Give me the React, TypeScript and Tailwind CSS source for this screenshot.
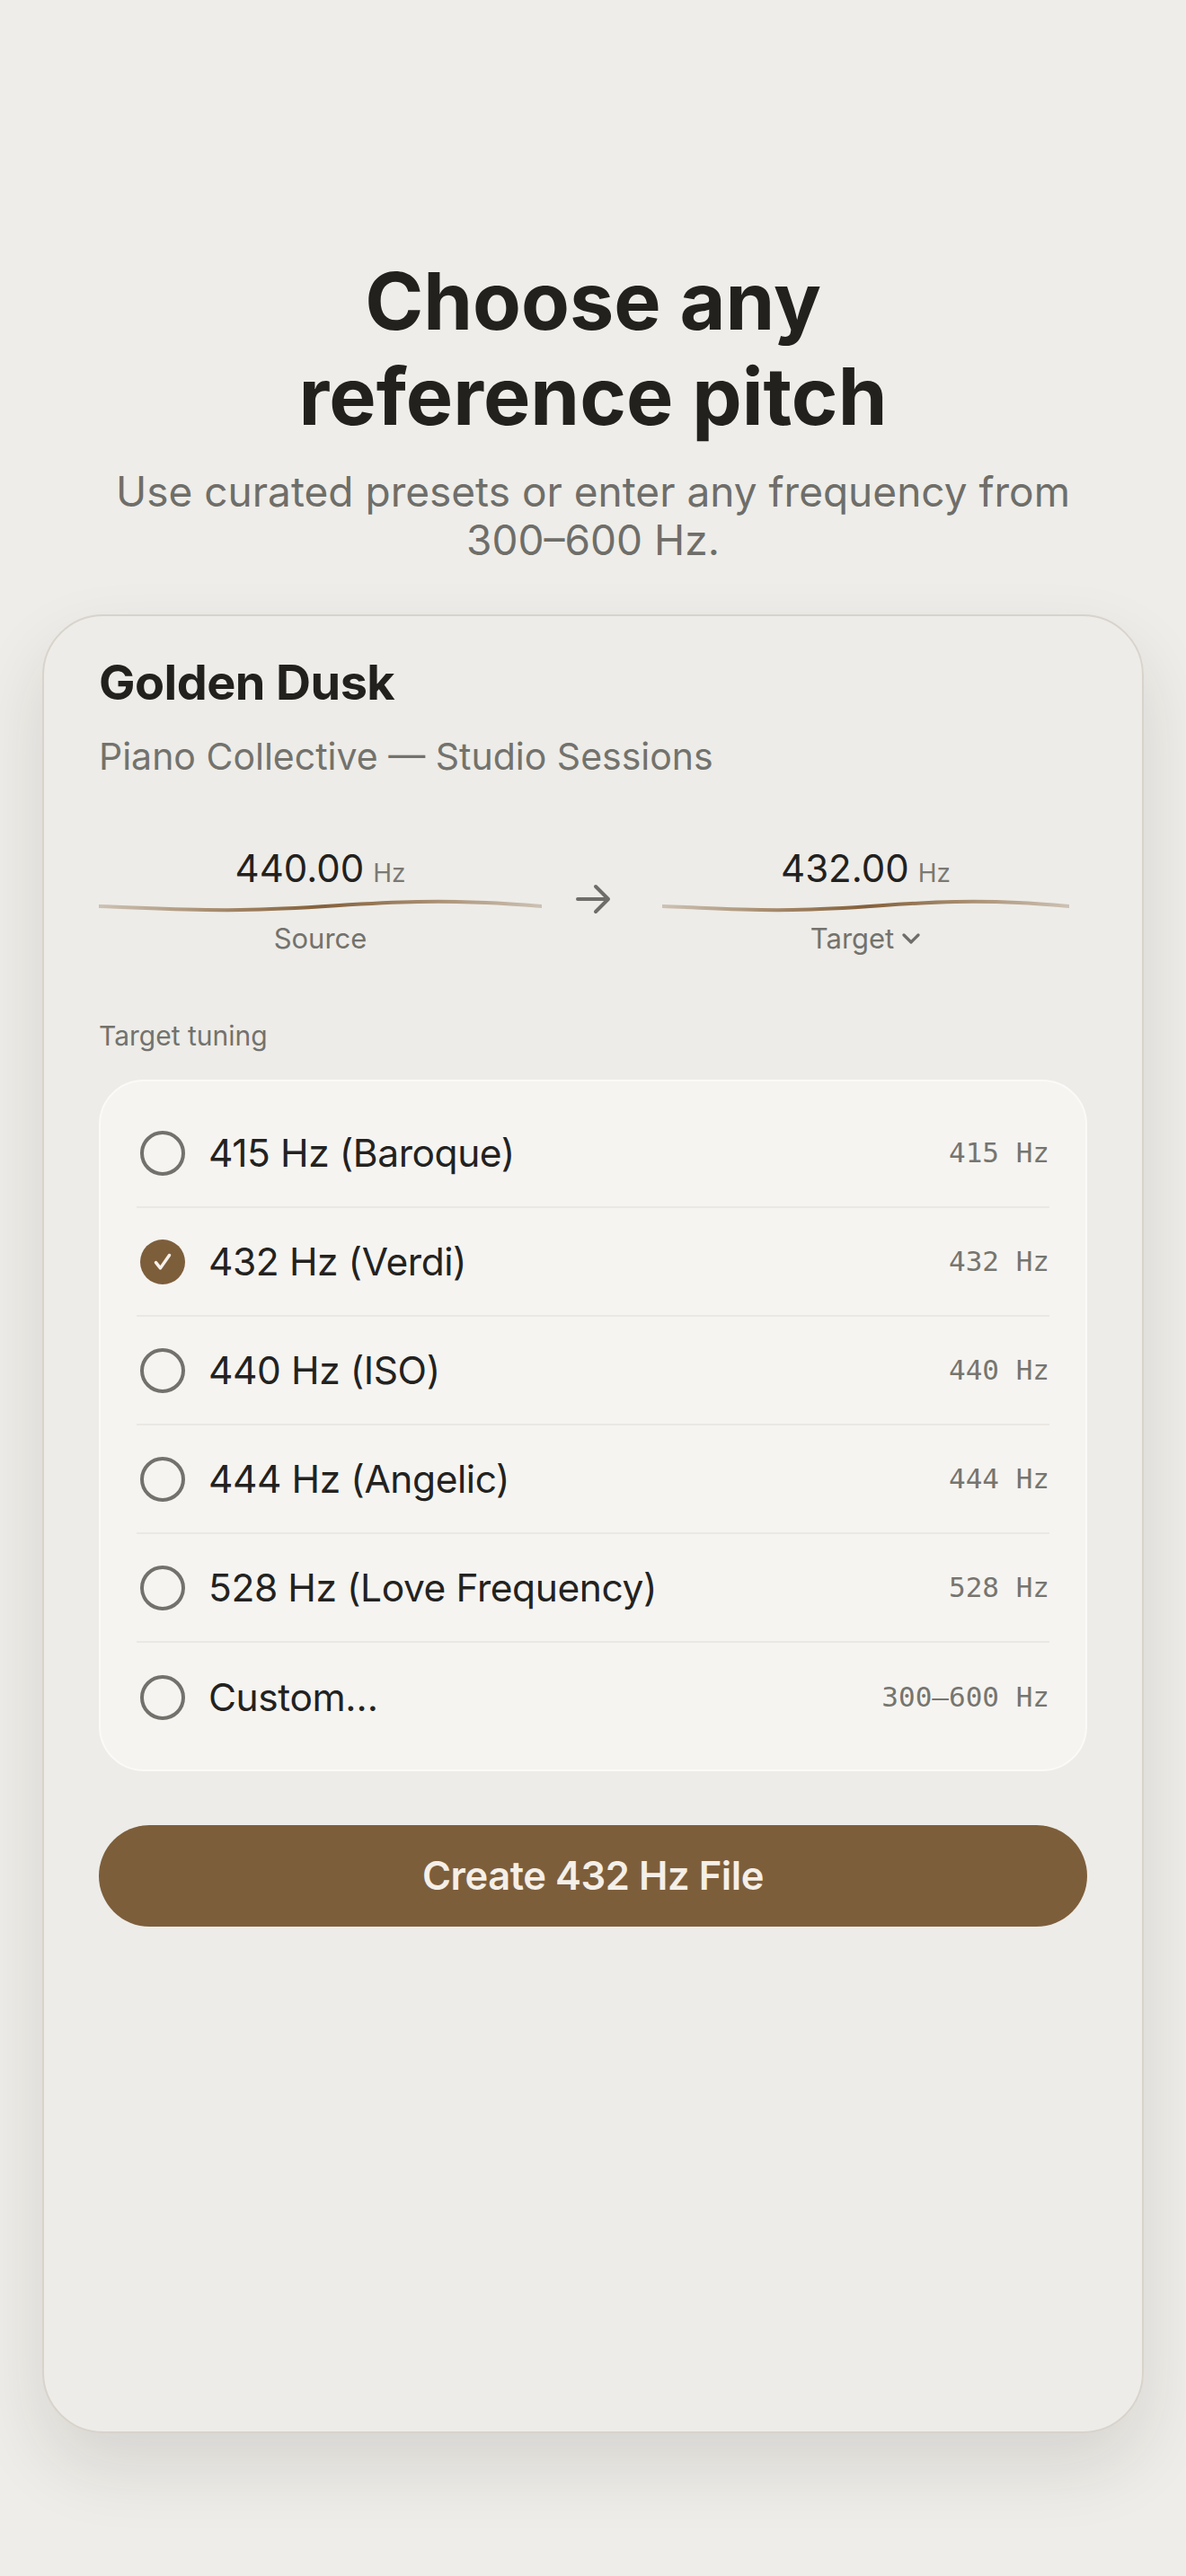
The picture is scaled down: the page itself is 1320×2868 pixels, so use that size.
import React from "react";

const sans = { fontFamily: "Inter, 'Noto Sans', sans-serif" } as const;

function Wave({ id }: { id: string }) {
  return (
    <svg width="100%" height="20" viewBox="0 0 100 20" preserveAspectRatio="none" className="block">
      <defs>
        <linearGradient id={id} x1="0" y1="0" x2="1" y2="0">
          <stop offset="0" stopColor="#cdc2b4" />
          <stop offset="0.25" stopColor="#a88e71" />
          <stop offset="0.5" stopColor="#84603a" />
          <stop offset="0.75" stopColor="#a88e71" />
          <stop offset="1" stopColor="#cdc2b4" />
        </linearGradient>
      </defs>
      <path
        d="M0 11 C 12 13, 20 16, 32 15 C 48 14, 58 7, 72 6 C 84 5, 92 8, 100 11"
        fill="none"
        stroke={`url(#${id})`}
        strokeWidth="4"
        vectorEffect="non-scaling-stroke"
        strokeLinecap="round"
      />
    </svg>
  );
}

function Radio({ checked }: { checked: boolean }) {
  if (checked) {
    return (
      <div className="w-[50px] h-[50px] rounded-full bg-[#7d5e3b] flex items-center justify-center shrink-0">
        <svg width="30" height="30" viewBox="0 0 24 24" fill="none" stroke="#f6f1ea" strokeWidth="2.8" strokeLinecap="round" strokeLinejoin="round">
          <path d="M6 12.5l4 5L18 6" />
        </svg>
      </div>
    );
  }
  return <div className="w-[50px] h-[50px] rounded-full border-[4px] border-[#72716c] shrink-0" />;
}

const options = [
  { label: "415 Hz (Baroque)", right: "415 Hz", checked: false },
  { label: "432 Hz (Verdi)", right: "432 Hz", checked: true },
  { label: "440 Hz (ISO)", right: "440 Hz", checked: false },
  { label: "444 Hz (Angelic)", right: "444 Hz", checked: false },
  { label: "528 Hz (Love Frequency)", right: "528 Hz", checked: false },
  { label: "Custom…", right: "300—600 Hz", checked: false },
];

export default function App() {
  return (
    <div className="min-h-[2868px] w-full bg-[#eeede9] flex flex-col items-center pt-[282px]" style={sans}>
      <h1 className="text-[88px] leading-[106px] font-bold tracking-normal text-[#22211e] text-center">
        Choose any
        <br />
        reference pitch
      </h1>
      <p className="mt-[26px] text-[46px] leading-[54px] text-[#6f6e69] text-center">
        Use curated presets or enter any frequency from
        <br />
        300–600 Hz.
      </p>

      <div className="mt-[56px] w-[1226px] h-[2025px] rounded-[68px] border-2 border-[#d8d3cb] bg-[#edece8] shadow-[0_36px_80px_rgba(40,35,25,0.12)] pt-[40px] px-[61px]">
        <div className="text-[54px] leading-[68px] font-bold tracking-[-0.01em] text-[#22211e]">Golden Dusk</div>
        <div className="mt-[23px] text-[41px] leading-[50px] text-[#73726d]">
          Piano Collective — Studio Sessions
        </div>

        <div className="mt-[74px] flex items-start">
          <div className="w-[493px] flex flex-col items-center">
            <div className="h-[52px] leading-[52px] text-[#22211e]">
              <span className="text-[42px]">440.00</span>
              <span className="text-[28px] text-[#7a7974] ml-[10px]">Hz</span>
            </div>
            <div className="mt-[5px] w-full">
              <Wave id="w1" />
            </div>
            <div className="mt-[7px] text-[31px] leading-[40px] text-[#73726d]">Source</div>
          </div>
          <div className="ml-[37px] mt-[43px] w-[40px] h-[34px]">
            <svg width="40" height="34" viewBox="0 0 40 34" fill="none" stroke="#6e6d69" strokeWidth="4" strokeLinecap="round" strokeLinejoin="round">
              <path d="M3 17h34M23 3l14 14-14 14" />
            </svg>
          </div>
          <div className="ml-[57px] w-[453px] flex flex-col items-center">
            <div className="h-[52px] leading-[52px] text-[#22211e]">
              <span className="text-[42px]">432.00</span>
              <span className="text-[28px] text-[#7a7974] ml-[10px]">Hz</span>
            </div>
            <div className="mt-[5px] w-full">
              <Wave id="w2" />
            </div>
            <div className="mt-[7px] text-[31px] leading-[40px] text-[#73726d] flex items-center gap-[8px]">
              Target
              <svg width="22" height="14" viewBox="0 0 22 14" fill="none" stroke="#6e6d69" strokeWidth="3.2" strokeLinecap="round" strokeLinejoin="round">
                <path d="M3 3l8 8 8-8" />
              </svg>
            </div>
          </div>
        </div>

        <div className="mt-[70px] text-[30px] leading-[36px] text-[#73726d]">Target tuning</div>

        <div className="mt-[31px] rounded-[50px] bg-[#f5f4f1] border-2 border-[#fbfaf8] px-[40px] py-[20px]">
          {options.map((o, i) => (
            <div
              key={o.label}
              className={`h-[121px] flex items-center ${i < options.length - 1 ? "border-b-2 border-[#eae8e4]" : ""}`}
            >
              <div className="ml-[4px]">
                <Radio checked={o.checked} />
              </div>
              <div className="ml-[26px] flex-1 text-[42.5px] text-[#23221f] tracking-[-0.01em]">{o.label}</div>
              <div className="text-[31px] text-[#76756f]" style={{ fontFamily: "'DejaVu Sans Mono', monospace" }}>
                {o.right}
              </div>
            </div>
          ))}
        </div>

        <button className="mt-[60px] w-full h-[113px] rounded-full bg-[#7d5e3b] text-[#f4efe8] text-[43.5px] font-semibold tracking-[-0.01em]">
          Create 432 Hz File
        </button>
      </div>
    </div>
  );
}
